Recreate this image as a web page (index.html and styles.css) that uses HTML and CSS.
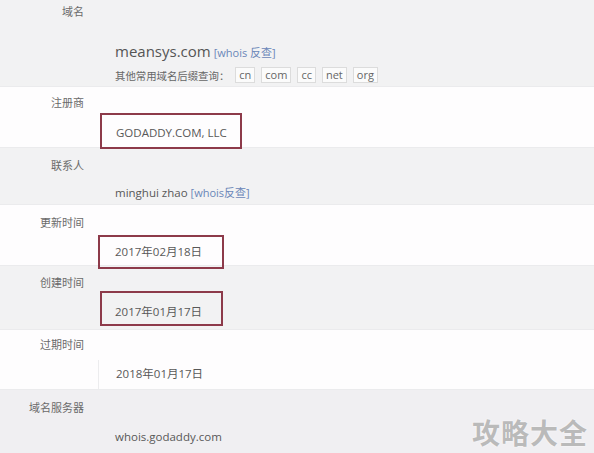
FILE: index.html
```html
<!DOCTYPE html>
<html lang="zh-CN">
<head>
<meta charset="utf-8">
<title>域名信息</title>
<link rel="stylesheet" href="styles.css">
</head>
<body>
<div class="table">
  <div class="row gray r-domain">
    <div class="label">域名</div>
    <div class="value">
      <div class="domain-line"><span class="domain">meansys.com</span> <a class="link">[whois 反查]</a></div>
      <div class="suffix-line">其他常用域名后缀查询：<span class="tag">cn</span><span class="tag">com</span><span class="tag">cc</span><span class="tag">net</span><span class="tag">org</span></div>
    </div>
  </div>
  <div class="row white r-registrar">
    <div class="label">注册商</div>
    <div class="value"><span class="mark mark-registrar">GODADDY.COM, LLC</span></div>
  </div>
  <div class="row gray r-contact">
    <div class="label">联系人</div>
    <div class="value plain">minghui zhao <a class="link">[whois反查]</a></div>
  </div>
  <div class="row white r-updated">
    <div class="label">更新时间</div>
    <div class="value"><span class="mark mark-updated">2017年02月18日</span></div>
  </div>
  <div class="row gray r-created">
    <div class="label">创建时间</div>
    <div class="value"><span class="mark mark-created">2017年01月17日</span></div>
  </div>
  <div class="row white r-expire">
    <div class="label">过期时间</div>
    <div class="value plain ruled">2018年01月17日</div>
  </div>
  <div class="row gray r-ns">
    <div class="label">域名服务器</div>
    <div class="value plain">whois.godaddy.com</div>
  </div>
  <div class="watermark">攻略大全</div>
</div>
</body>
</html>
```

FILE: styles.css
```css
* { box-sizing: border-box; }
html, body { margin: 0; padding: 0; }
body {
  width: 594px;
  height: 453px;
  overflow: hidden;
  background: #f2f2f3;
  font-family: "Open Sans", "Noto Sans CJK SC", sans-serif;
  color: #555;
}
.table { position: relative; width: 594px; }
.row {
  display: grid;
  grid-template-columns: 98px 1fr;
  grid-template-rows: auto 1fr;
  border-bottom: 1px solid #ebebed;
}
.gray { background: #f2f2f3; }
.white { background: #fefdfe; }
.label {
  grid-column: 1;
  grid-row: 1;
  text-align: right;
  padding-right: 14px;
  font-family: "Noto Sans CJK SC", sans-serif;
  font-size: 11px;
  line-height: 14px;
  color: #6a6a6a;
}
.value {
  grid-column: 2;
  grid-row: 2;
  font-size: 11.5px;
  color: #585858;
}
.plain { padding-left: 17px; line-height: 20px; }
.link { color: #6a86b8; font-size: 11px; }

.r-domain { height: 87px; padding-top: 4px; }
.r-domain .value { padding-left: 17px; padding-top: 23px; }
.domain-line { line-height: 20px; }
.domain { font-size: 15px; color: #555; }
.suffix-line {
  display: flex;
  align-items: center;
  margin-top: 4px;
  font-family: "Noto Sans CJK SC", sans-serif;
  font-size: 10.4px;
  color: #666;
}
.tag {
  display: inline-block;
  height: 16px;
  line-height: 14px;
  padding: 0 3px;
  margin-right: 6px;
  border: 1px solid #dcdcdc;
  background: #fbfbfb;
  font-family: "Open Sans", sans-serif;
  font-size: 11px;
  color: #666;
}
.suffix-line .tag:first-of-type { margin-left: 6px; }

.mark {
  display: inline-block;
  border: 2px solid #8d3a4a;
  padding-left: 14px;
  line-height: 30px;
  white-space: nowrap;
}
.r-registrar { height: 61px; padding-top: 8px; }
.r-registrar .value { padding-top: 4px; padding-left: 2px; }
.mark-registrar { width: 142px; height: 36px; padding-top: 4px; line-height: 28px; }

.r-contact { height: 57px; padding-top: 10px; }
.r-contact .value { padding-top: 11px; }

.r-updated { height: 61px; padding-top: 10px; }
.r-updated .value { padding-top: 6px; }
.mark-updated { width: 126px; height: 34px; line-height: 30px; padding-left: 15px; }

.r-created { height: 64px; padding-top: 9px; }
.r-created .value { padding-top: 2px; padding-left: 2px; }
.mark-created { width: 123px; height: 35px; padding-top: 5px; line-height: 28px; padding-left: 13px; }

.r-expire { height: 60px; padding-top: 7px; }
.r-expire .value { margin-top: 9px; padding-top: 4px; }
.ruled { border-left: 1px solid #ececee; }

.r-ns { height: 63px; padding-top: 10px; background: #f0eff2; border-bottom: none; }
.r-ns .value { padding-top: 13px; }

.watermark {
  position: absolute;
  right: 6px;
  bottom: 4px;
  font-family: "Noto Sans CJK SC", sans-serif;
  font-weight: 700;
  font-size: 28px;
  line-height: 34px;
  letter-spacing: 1px;
  color: #bababa;
  text-shadow: 0 0 2px #fff;
}
```
